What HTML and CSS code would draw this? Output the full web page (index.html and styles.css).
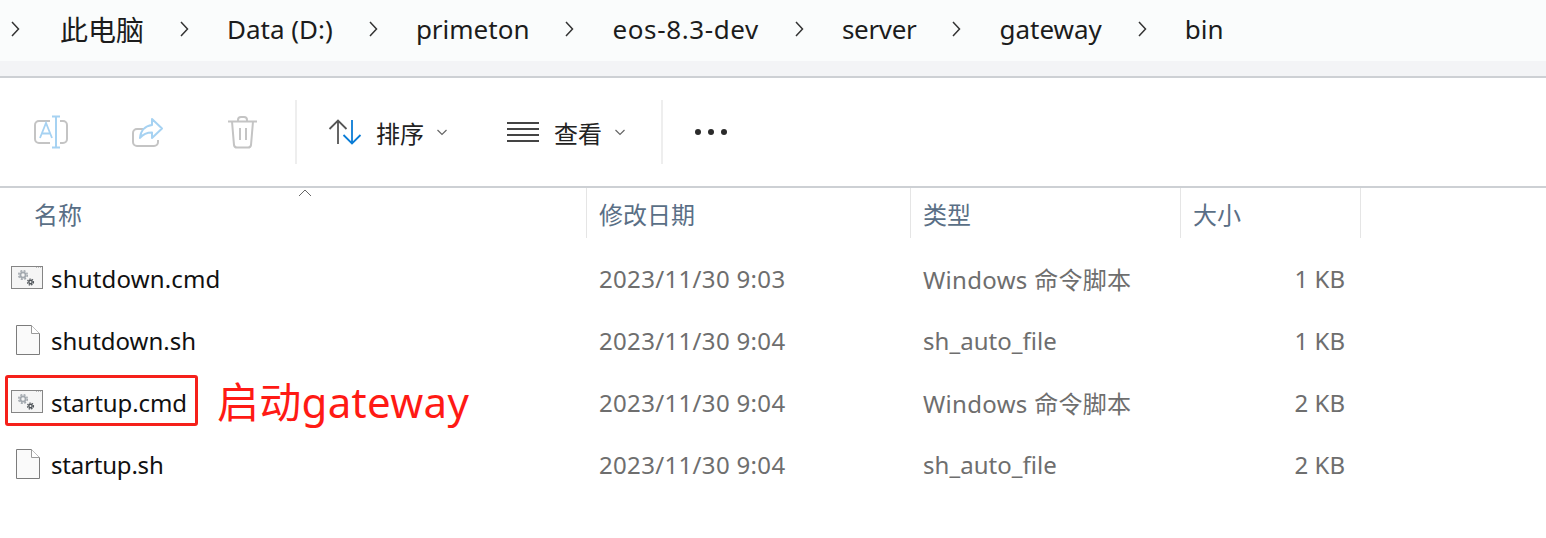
FILE: index.html
```html
<!DOCTYPE html>
<html lang="zh">
<head>
<meta charset="utf-8">
<title>bin</title>
<link rel="stylesheet" href="styles.css">
</head>
<body>
<svg class="defs" width="0" height="0">
  <symbol id="chev" viewBox="0 0 10 18"><path d="M2 2l6.500 7-6.500 7" fill="none" stroke="#333" stroke-width="1.500"/></symbol>
  <symbol id="down" viewBox="0 0 10 7"><path d="M.5 1l4.500 4.500L9.500 1" fill="none" stroke="#666" stroke-width="1.200"/></symbol>
  <symbol id="cmd" viewBox="0 0 32 24">
    <rect x="0.500" y="0.500" width="31" height="22" fill="#f5f5f5" stroke="#858585"/>
    <path d="M25 1.500h1M27 1.500h1M29 1.500h1" stroke="#bbb"/>
    <circle cx="12" cy="9" r="2.600" fill="none" stroke="#a2a8ae" stroke-width="1.800"/>
    <circle cx="12" cy="9" r="4.300" fill="none" stroke="#a2a8ae" stroke-width="1.500" stroke-dasharray="2 1.400"/>
    <circle cx="19.500" cy="16" r="1.700" fill="none" stroke="#50555a" stroke-width="1.400"/>
    <circle cx="19.500" cy="16" r="3" fill="none" stroke="#50555a" stroke-width="1.200" stroke-dasharray="1.500 1"/>
  </symbol>
  <symbol id="file" viewBox="0 0 24 30">
    <path d="M.5 .5h15l8 8v21H.5z" fill="#fafafa" stroke="#7c7c7c"/>
    <path d="M15.500 .5v8h8" fill="#fff" stroke="#9a9a9a"/>
  </symbol>
</svg>

<nav class="crumbs">
  <svg class="chev first"><use href="#chev"/></svg><span class="crumb pc">此电脑</span>
  <svg class="chev"><use href="#chev"/></svg><span class="crumb">Data (D:)</span>
  <svg class="chev"><use href="#chev"/></svg><span class="crumb">primeton</span>
  <svg class="chev"><use href="#chev"/></svg><span class="crumb wide">eos-8.3-dev</span>
  <svg class="chev"><use href="#chev"/></svg><span class="crumb tight">server</span>
  <svg class="chev"><use href="#chev"/></svg><span class="crumb">gateway</span>
  <svg class="chev"><use href="#chev"/></svg><span class="crumb">bin</span>
</nav>
<div class="band"></div>

<section class="toolbar">
  <div class="tool-group">
    <svg class="tool-icon" viewBox="0 0 34 34">
      <path d="M16 6H5a4 4 0 0 0-4 4v14a4 4 0 0 0 4 4h11M26 6h3a4 4 0 0 1 4 4v14a4 4 0 0 1-4 4h-3" fill="none" stroke="#c4c4c4" stroke-width="2"/>
      <path d="M22 1.500v31M18 1.500h8M18 32.500h8" fill="none" stroke="#a6d2f2" stroke-width="2"/>
      <path d="M6.500 23l6-15 6 15M8.500 18.500h8" fill="none" stroke="#a6d2f2" stroke-width="1.800" transform="translate(-.5 0)"/>
    </svg>
    <svg class="tool-icon" viewBox="0 0 34 34">
      <path d="M14 14H7a4 4 0 0 0-4 4v9a4 4 0 0 0 4 4h17a4 4 0 0 0 4-4v-2" fill="none" stroke="#c4c4c4" stroke-width="2"/>
      <path d="M22 4l10 9.500L22 23v-5.500c-4.500 0-8.500 1-12 5.500 .5-7 5-12 12-13z" fill="none" stroke="#a6d2f2" stroke-width="2" stroke-linejoin="round"/>
    </svg>
    <svg class="tool-icon" viewBox="0 0 34 34">
      <path d="M2 6.500h29M12 6.500V5a3 3 0 0 1 3-3h3a3 3 0 0 1 3 3v1.500M6 6.500l2 23.500a3 3 0 0 0 3 2.500h11a3 3 0 0 0 3-2.500l2-23.500M14 13v12M20 13v12" fill="none" stroke="#c4c4c4" stroke-width="2"/>
    </svg>
  </div>
  <div class="tool-sep"></div>
  <div class="tool-menu sort">
    <svg class="menu-icon" viewBox="0 0 34 30">
      <path d="M10 27V3.500M1.500 12l8.500-8.500L18.500 12" fill="none" stroke="#555" stroke-width="1.800"/>
      <path d="M24 3v23.500M15.500 18l8.500 8.500 8.500-8.500" fill="none" stroke="#0a7cd6" stroke-width="1.800"/>
    </svg>
    <span class="menu-label">排序</span>
    <svg class="menu-down"><use href="#down"/></svg>
  </div>
  <div class="tool-menu view">
    <svg class="menu-icon lines" viewBox="0 0 32 22">
      <path d="M0 2h32M0 8h32M0 14h32M0 20h32" stroke="#444" stroke-width="1.800"/>
    </svg>
    <span class="menu-label">查看</span>
    <svg class="menu-down"><use href="#down"/></svg>
  </div>
  <div class="tool-sep"></div>
  <div class="more"><i></i><i></i><i></i></div>
</section>

<section class="list">
  <svg class="sort-caret" viewBox="0 0 14 8"><path d="M1 7l6-6 6 6" fill="none" stroke="#666" stroke-width="1"/></svg>
  <header class="row head">
    <div class="c-name head-name">名称</div>
    <div class="c-date">修改日期</div>
    <div class="c-type">类型</div>
    <div class="c-size">大小</div>
  </header>
  <div class="row">
    <div class="c-name loose"><span class="ico"><svg class="i-cmd"><use href="#cmd"/></svg></span>shutdown.cmd</div>
    <div class="c-date">2023/11/30 9:03</div>
    <div class="c-type cmd-type">Windows 命令脚本</div>
    <div class="c-size">1 KB</div>
  </div>
  <div class="row">
    <div class="c-name"><span class="ico"><svg class="i-file"><use href="#file"/></svg></span>shutdown.sh</div>
    <div class="c-date">2023/11/30 9:04</div>
    <div class="c-type">sh_auto_file</div>
    <div class="c-size">1 KB</div>
  </div>
  <div class="row">
    <div class="c-name snug"><span class="ico"><svg class="i-cmd"><use href="#cmd"/></svg></span>startup.cmd</div>
    <div class="c-date">2023/11/30 9:04</div>
    <div class="c-type cmd-type">Windows 命令脚本</div>
    <div class="c-size">2 KB</div>
  </div>
  <div class="row">
    <div class="c-name snugger"><span class="ico"><svg class="i-file"><use href="#file"/></svg></span>startup.sh</div>
    <div class="c-date">2023/11/30 9:04</div>
    <div class="c-type">sh_auto_file</div>
    <div class="c-size">2 KB</div>
  </div>
  <div class="callout-box"></div>
  <div class="callout-text">启动gateway</div>
</section>
</body>
</html>
```
FILE: styles.css
```css
* { box-sizing: border-box; }
html, body { margin: 0; padding: 0; }
body {
  width: 1546px;
  height: 538px;
  overflow: hidden;
  background: #fff;
  color: #1a1a1a;
  font-family: "Noto Sans", "Noto Sans CJK SC", sans-serif;
}
.defs { position: absolute; }

.crumbs {
  height: 61px;
  background: #fafcfc;
  display: flex;
  align-items: center;
  padding-bottom: 3px;
  font-size: 26px;
  color: #1c1c1c;
}
.chev { width: 10px; height: 18px; margin: 0 38px 0 35px; flex: none; }
.chev.first { margin: 0 40px 0 10px; }
.crumb { white-space: nowrap; }
.crumb.pc { font-size: 28px; }
.crumb.wide { letter-spacing: .62px; }
.crumb.tight { letter-spacing: -.33px; }

.band { height: 17px; background: #f3f4f6; border-bottom: 2px solid #cdd0d4; }

.toolbar {
  height: 110px;
  border-bottom: 2px solid #cdd0d4;
  display: flex;
  align-items: center;
}
.tool-group { display: flex; gap: 62px; padding-left: 34px; width: 295px; }
.tool-icon { width: 34px; height: 34px; flex: none; }
.tool-sep { width: 2px; height: 64px; background: #eeeeee; flex: none; }
.tool-menu { display: flex; align-items: center; flex: none; }
.sort { padding-left: 31px; width: 177px; }
.view { width: 187px; padding-left: 33px; }
.menu-icon { width: 34px; height: 30px; flex: none; }
.menu-icon.lines { width: 32px; height: 22px; }
.menu-label { font-size: 24px; margin-left: 14px; color: #222; white-space: nowrap; }
.view .menu-label { margin-left: 15px; }
.menu-down { width: 10px; height: 7px; margin-left: 13px; flex: none; }
.more { display: flex; gap: 7px; padding-left: 32px; }
.more i { width: 6px; height: 6px; border-radius: 50%; background: #2b2b2b; }

.list { position: relative; }
.sort-caret { position: absolute; left: 298px; top: 1px; width: 14px; height: 8px; }
.row {
  height: 62px;
  display: flex;
  align-items: center;
  font-size: 24px;
  color: #6e6e6e;
  white-space: nowrap;
}
.row.head { height: 52px; margin-bottom: 7px; color: #5a6f86; font-size: 24px; padding-bottom: 2px; }
.row .c-name { color: #111; }
.row.head .c-name { color: #5a6f86; }
.c-name { width: 587px; display: flex; align-items: center; height: 100%; padding-left: 11px; }
.c-name.loose { letter-spacing: .17px; }
.c-name.snug { letter-spacing: -.09px; }
.c-name.snugger { letter-spacing: -.2px; }
.c-date { width: 324px; padding-left: 12px; height: 100%; display: flex; align-items: center; letter-spacing: .33px; }
.head .c-date { letter-spacing: 0; }
.c-type { width: 270px; padding-left: 12px; height: 100%; display: flex; align-items: center; letter-spacing: .05px; }
.c-type.cmd-type { letter-spacing: .3px; }
.head .c-type { letter-spacing: 0; }
.c-size { width: 180px; height: 100%; display: flex; align-items: center; justify-content: flex-end; padding-right: 16px; }
.head-name { padding-left: 34px; }
.head .c-name, .head .c-date, .head .c-type, .head .c-size { border-right: 1px solid #e5e5e5; }
.head .c-size { justify-content: flex-start; padding-left: 12px; padding-right: 0; }
.ico { width: 40px; flex: none; display: flex; align-items: center; }
.i-cmd { width: 32px; height: 24px; }
.i-file { width: 24px; height: 30px; margin-left: 5px; }

.callout-box {
  position: absolute;
  left: 5px;
  top: 187px;
  width: 193px;
  height: 51px;
  border: 3px solid #f5201a;
  border-radius: 3px;
}
.callout-text {
  position: absolute;
  left: 217px;
  top: 187px;
  font-size: 42px;
  letter-spacing: .3px;
  line-height: 54px;
  color: #ff1a14;
  white-space: nowrap;
}
```
